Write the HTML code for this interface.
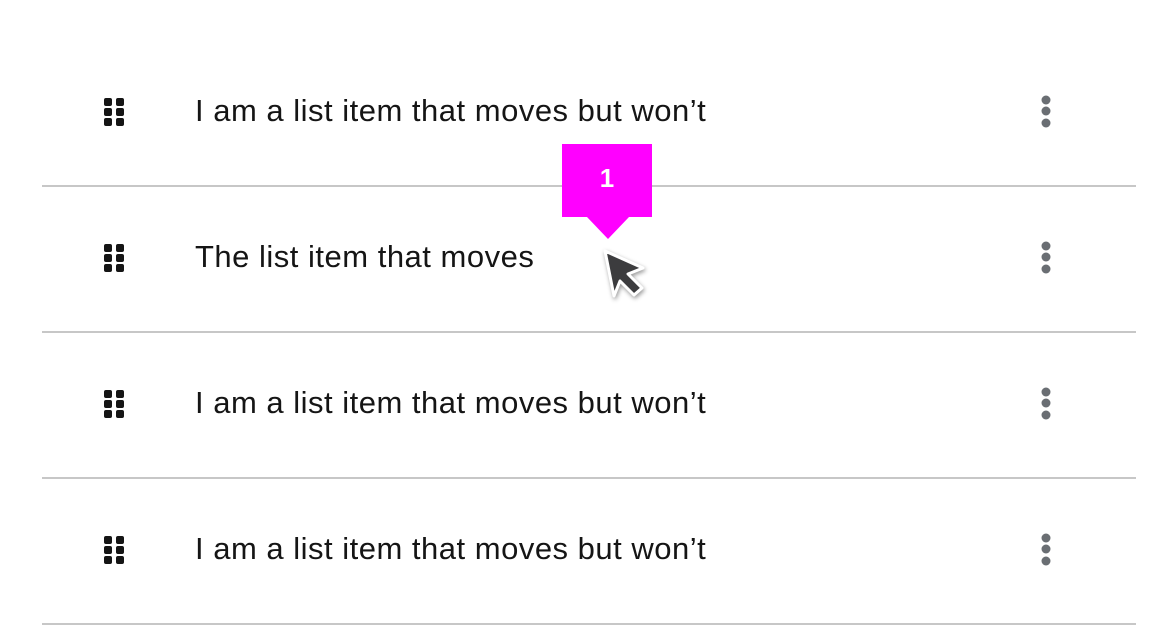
<!DOCTYPE html>
<html><head><meta charset="utf-8"><style>
html,body{margin:0;padding:0;background:#fff;width:1176px;height:644px;overflow:hidden;position:relative;font-family:"Liberation Sans",sans-serif}
.row{position:absolute;left:42px;width:1094px;height:146px;border-bottom:2px solid #c7c7c7}
.t{position:absolute;left:153px;top:0;line-height:146px;font-size:31px;letter-spacing:0.5px;color:#151515;white-space:nowrap}
.g{position:absolute;left:62px}
.k{position:absolute;left:996px}
</style></head><body>
<div class="row" style="top:39px"><svg class="g" width="22" height="30" style="top:59px"><g fill="#151515"><rect x="0" y="0" width="8" height="8" rx="2"/><rect x="12" y="0" width="8" height="8" rx="2"/><rect x="0" y="10" width="8" height="8" rx="2"/><rect x="12" y="10" width="8" height="8" rx="2"/><rect x="0" y="20" width="8" height="8" rx="2"/><rect x="12" y="20" width="8" height="8" rx="2"/></g></svg><div class="t" style="top:-1px">I am a list item that moves but won’t</div><svg class="k" width="16" height="36" style="top:55px"><g fill="#6a6e73"><circle cx="8" cy="6" r="4.5"/><circle cx="8" cy="17" r="4.5"/><circle cx="8" cy="29" r="4.5"/></g></svg></div>
<div class="row" style="top:185px"><svg class="g" width="22" height="30" style="top:59px"><g fill="#151515"><rect x="0" y="0" width="8" height="8" rx="2"/><rect x="12" y="0" width="8" height="8" rx="2"/><rect x="0" y="10" width="8" height="8" rx="2"/><rect x="12" y="10" width="8" height="8" rx="2"/><rect x="0" y="20" width="8" height="8" rx="2"/><rect x="12" y="20" width="8" height="8" rx="2"/></g></svg><div class="t" style="top:-1px">The list item that moves</div><svg class="k" width="16" height="36" style="top:55px"><g fill="#6a6e73"><circle cx="8" cy="6" r="4.5"/><circle cx="8" cy="17" r="4.5"/><circle cx="8" cy="29" r="4.5"/></g></svg></div>
<div class="row" style="top:331px"><svg class="g" width="22" height="30" style="top:59px"><g fill="#151515"><rect x="0" y="0" width="8" height="8" rx="2"/><rect x="12" y="0" width="8" height="8" rx="2"/><rect x="0" y="10" width="8" height="8" rx="2"/><rect x="12" y="10" width="8" height="8" rx="2"/><rect x="0" y="20" width="8" height="8" rx="2"/><rect x="12" y="20" width="8" height="8" rx="2"/></g></svg><div class="t" style="top:-1px">I am a list item that moves but won’t</div><svg class="k" width="16" height="36" style="top:55px"><g fill="#6a6e73"><circle cx="8" cy="6" r="4.5"/><circle cx="8" cy="17" r="4.5"/><circle cx="8" cy="29" r="4.5"/></g></svg></div>
<div class="row" style="top:477px"><svg class="g" width="22" height="30" style="top:59px"><g fill="#151515"><rect x="0" y="0" width="8" height="8" rx="2"/><rect x="12" y="0" width="8" height="8" rx="2"/><rect x="0" y="10" width="8" height="8" rx="2"/><rect x="12" y="10" width="8" height="8" rx="2"/><rect x="0" y="20" width="8" height="8" rx="2"/><rect x="12" y="20" width="8" height="8" rx="2"/></g></svg><div class="t" style="top:-1px">I am a list item that moves but won’t</div><svg class="k" width="16" height="36" style="top:55px"><g fill="#6a6e73"><circle cx="8" cy="6" r="4.5"/><circle cx="8" cy="17" r="4.5"/><circle cx="8" cy="29" r="4.5"/></g></svg></div>
<svg style="position:absolute;left:0;top:0" width="1176" height="644">
<polygon points="562,144 652,144 652,217 629,217 608,239 587,217 562,217" fill="#ff00ff"/>
<text x="607" y="187" text-anchor="middle" font-family="Liberation Sans" font-weight="bold" font-size="26" fill="#fff">1</text>
<path d="M605,251 L643,268 L628,274 L642,288 L634,295 L620,281 L614,296 Z" fill="#3c3c3e" stroke="#fff" stroke-width="3" stroke-linejoin="round" style="filter:drop-shadow(1px 2px 2px rgba(0,0,0,.4))"/>
</svg>
</body></html>
